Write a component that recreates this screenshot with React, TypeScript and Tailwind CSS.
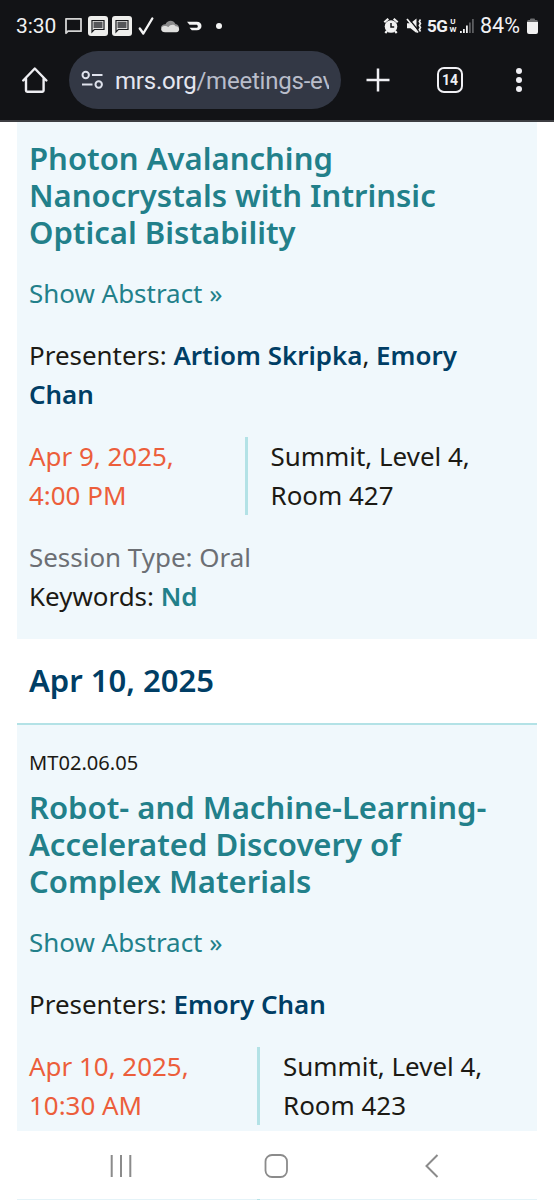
import type { ReactNode } from "react";

const StatusBar = () => {
  return (
    <div className="flex h-[51px] items-center pt-px pl-4 pr-[16px] text-[#f1f1f3]">
      <span className="w-[42px] text-[21px] leading-none tracking-[-0.1px] whitespace-nowrap">
        3:30
      </span>
      <svg className="ml-[6px] h-5 w-[160px]" viewBox="64 16 160 20" fill="none">
        <path d="M66 33.2V18.8h15v12.4H68z" stroke="#d4d4d4" strokeWidth="1.8" strokeLinejoin="round" />
        <rect x="88" y="16" width="20" height="20" rx="3" fill="#eeeeec" />
        <path d="M92 32V20.5h12v9H94.3z" stroke="#17181b" strokeWidth="1.2" />
        <rect x="93.5" y="21.7" width="9" height="6.4" fill="#56575a" />
        <rect x="112" y="16" width="20" height="20" rx="3" fill="#eeeeec" />
        <path d="M116 32V20.5h12v9h-9.7z" stroke="#17181b" strokeWidth="1.2" />
        <rect x="117.5" y="21.7" width="9" height="6.4" fill="#56575a" />
        <path d="M139.8 28.5l3.5 5 9-15" stroke="#f4f4f4" strokeWidth="2.4" strokeLinecap="round" strokeLinejoin="round" />
        <path d="M161 28c0-3 2.5-4 4.5-3.8C167 20.5 173 19 175.5 24c2.5.4 3.5 2 3.5 4z" fill="#8b8b8c" />
        <path d="M165 32.3c-4.5 0-5.3-5.3-1-6.3 2-.4 3 .3 4.5 1 1.5-2.5 5.5-3 7-.8 4.500-.4 5 5.700.8 6.100z" fill="#dededd" />
        <path d="M187 21.8h9.8c3 0 4.7 1.8 4.7 4.1 0 2.4-1.8 4.3-4.7 4.3h-5l-2.300-2.400h6.800c1 0 1.500-.7 1.500-1.600s-.6-1.500-1.500-1.500h-6.800z" fill="#f4f4f4" />
        <circle cx="219" cy="26" r="3" fill="#f4f4f4" />
      </svg>
      <svg className="ml-auto h-5 w-[40px]" viewBox="383 16 40 20" fill="none">
        <circle cx="391" cy="26.5" r="6.3" fill="#f1f1f1" />
        <path d="M384.3 22.3l4-3.6M397.7 22.3l-4-3.6M387 31l-1.700 1.900M395 31l1.700 1.900" stroke="#f1f1f1" strokeWidth="2.2" />
        <path d="M391 23v4h3.2" stroke="#121316" strokeWidth="1.5" />
        <path d="M407 23.2h3.5l6-4.7v14.5l-6-4.700H407z" fill="#f1f1f1" />
        <path d="M408.500 18.500L419 31.200" stroke="#121316" strokeWidth="1.4" />
        <path d="M407 19l11 13.500" stroke="#f1f1f1" strokeWidth="1.7" />
        <path d="M420.500 19.500l-1.200 2 1.200 2-1.200 2 1.200 2-1.200 2 1.200 2" stroke="#f1f1f1" strokeWidth="1.6" />
      </svg>
      <span className="ml-[4px] w-[22px] text-[17px] leading-none font-bold tracking-[-0.5px]">5G</span>
      <span className="flex w-[8px] flex-col items-center text-[8px] leading-[8px] font-bold">
        <span>U</span>
        <span>W</span>
      </span>
      <svg className="ml-[3px] h-4 w-[14px]" viewBox="0 0 14 16">
        <path d="M0 13h1.8v2H0zM3 11h1.8v4H3zM6 7.500h1.800v7.500H6z" fill="#f1f1f1" />
        <path d="M9 4.500h1.800v10.500H9zM12 1h1.800v14H12z" fill="#5c5d60" />
      </svg>
      <span className="ml-[6px] w-[45px] text-[21.5px] leading-none whitespace-nowrap">
        84%
      </span>
      <svg className="ml-[2px] h-4 w-[11px]" viewBox="0 0 11 16">
        <path d="M3 1.500Q3 .5 4 .5h3q1 0 1 1V2h1.500Q11 2 11 4H0q0-2 1.500-2H3z" fill="#6d6e70" />
        <path d="M0 4h11v10q0 2-2 2H2q-2 0-2-2z" fill="#f1f1f1" />
      </svg>
    </div>
  );
};

const BrowserBar = () => {
  return (
    <div className="flex h-[58px] items-center pl-[21px]">
      <svg className="h-[28px] w-[28px]" viewBox="0 0 28 28" fill="none" stroke="#eeeef2" strokeWidth="2.4" strokeLinejoin="round" strokeLinecap="round">
        <path d="M5 12.5v12q0 1.200 1.200 1.200h15.200q1.200 0 1.200-1.200v-12M2.200 14.500L13.800 2.500l11.600 12" />
      </svg>
      <div className="ml-5 flex h-[58px] w-[272px] items-center rounded-full bg-[#333845] pl-[12px]">
        <svg className="h-5 w-[23px]" viewBox="0 0 23 20" fill="none" stroke="#dfe2ec" strokeWidth="2">
          <circle cx="4.7" cy="5" r="3.2" />
          <path d="M11 5h10.500M1 14.500h10.500" />
          <circle cx="17.7" cy="14.5" r="3.2" />
        </svg>
        <div className="ml-[11px] w-[214px] overflow-hidden pt-px text-[24px] leading-8 tracking-[-0.22px] whitespace-nowrap text-[#b9bdca]">
          <span className="text-[#e4e6f0]">mrs.org</span>/meetings-ev
        </div>
      </div>
      <svg className="ml-[25px] h-6 w-6" viewBox="0 0 24 24" stroke="#f0f0f4" strokeWidth="2.5">
        <path d="M12 .5v23M.5 12h23" />
      </svg>
      <div className="ml-[47px] flex h-[26px] w-[26px] items-center justify-center rounded-[7px] border-[2.5px] border-[#f0f0f4] text-[14px] leading-none font-bold text-[#f0f0f4]">
        14
      </div>
      <svg className="ml-[53px] h-6 w-[6px]" viewBox="0 0 6 24" fill="#f0f0f4">
        <circle cx="3" cy="3" r="3" />
        <circle cx="3" cy="12" r="3" />
        <circle cx="3" cy="21" r="3" />
      </svg>
    </div>
  );
};

const Title = ({ children }: { children: ReactNode }) => (
  <h2 className="text-[31.05px] leading-[37.3px] font-semibold text-[#22808a]">
    {children}
  </h2>
);

const Name = ({ children }: { children: ReactNode }) => (
  <strong className="font-semibold text-[#003e65]">{children}</strong>
);

export default function App() {
  return (
    <main className="flex h-[1200px] w-[554px] flex-col overflow-hidden bg-white font-['Noto_Sans',sans-serif] text-[25.95px] leading-[39px] text-[#1c1a14]">
      <header className="h-[122px] shrink-0 border-b-2 border-[#3d3e42] bg-[#121316] font-['Roboto',sans-serif]">
        <StatusBar />
        <BrowserBar />
      </header>

      <article className="mx-[17px] h-[517px] shrink-0 bg-[#f0f8fc] px-3 pt-[17.6px]">
        <Title>
          Photon Avalanching
          <br />
          Nanocrystals with Intrinsic
          <br />
          Optical Bistability
        </Title>
        <p className="mt-[22.8px] text-[#22808a]">Show Abstract »</p>
        <p className="mt-[23px]">
          Presenters: <Name>Artiom Skripka</Name>, <Name>Emory</Name>
          <br />
          <Name>Chan</Name>
        </p>
        <div className="mt-[23px] flex">
          <p className="w-[219px] border-r-3 border-[#b3e2e6] text-[#ec5e3b]">
            Apr 9, 2025,
            <br />
            4:00 PM
          </p>
          <p className="pl-[22.5px]">
            Summit, Level 4,
            <br />
            Room 427
          </p>
        </div>
        <p className="mt-[23px] text-[#6c6f74]">Session Type: Oral</p>
        <p>
          Keywords: <strong className="font-semibold text-[#22808a]">Nd</strong>
        </p>
      </article>

      <h2 className="mx-[17px] h-[86px] shrink-0 border-b-2 border-[#b3e2e6] pt-[22px] pl-3 text-[31.05px] font-semibold text-[#003e65]">
        Apr 10, 2025
      </h2>

      <article className="mx-[17px] h-[406px] shrink-0 bg-[#f0f8fc] px-3 pt-[18px]">
        <p className="text-[20.1px]">MT02.06.05</p>
        <div className="mt-[6.6px]">
          <Title>
            Robot- and Machine-Learning-
            <br />
            Accelerated Discovery of
            <br />
            Complex Materials
          </Title>
        </div>
        <p className="mt-[22.6px] text-[#22808a]">Show Abstract »</p>
        <p className="mt-[23px]">
          Presenters: <Name>Emory Chan</Name>
        </p>
        <div className="mt-[23px] flex">
          <p className="w-[231px] border-r-3 border-[#b3e2e6] text-[#ec5e3b]">
            Apr 10, 2025,
            <br />
            10:30 AM
          </p>
          <p className="pl-[23px]">
            Summit, Level 4,
            <br />
            Room 423
          </p>
        </div>
      </article>

      <nav className="flex h-[68px] shrink-0 items-center pt-[2px]">
        <svg className="ml-[110px] h-6 w-[22px]" viewBox="0 0 22 24" stroke="#8b8b8b" strokeWidth="2">
          <path d="M1.7 1v22M11 1v22M20.3 1v22" />
        </svg>
        <svg className="ml-[132px] h-6 w-6" viewBox="0 0 24 24" fill="none" stroke="#8b8b8b" strokeWidth="1.8">
          <rect x="1.5" y="1" width="21.5" height="22" rx="6.5" />
        </svg>
        <svg className="ml-[137px] h-6 w-[14px]" viewBox="0 0 14 24" fill="none" stroke="#8b8b8b" strokeWidth="2">
          <path d="M12.5 1L1.5 12l11 11" />
        </svg>
      </nav>
      <div className="mx-[17px] h-[2px] shrink-0 bg-[#e4f3f8] pl-[240px]">
        <div className="h-[2px] w-[3px] bg-[#b3e2e6]" />
      </div>
    </main>
  );
}
